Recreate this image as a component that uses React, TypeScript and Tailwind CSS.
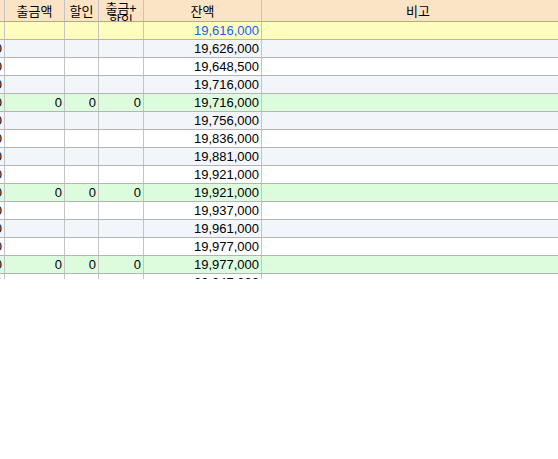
const rows = [
  { bal: "19,616,000", bg: "bg-[#fffcbe]", blue: true, zero: false, first: false },
  { bal: "19,626,000", bg: "bg-[#f2f6fa]" },
  { bal: "19,648,500", bg: "bg-white" },
  { bal: "19,716,000", bg: "bg-[#f2f6fa]" },
  { bal: "19,716,000", bg: "bg-[#ddfcdd]", zero: true },
  { bal: "19,756,000", bg: "bg-[#f2f6fa]" },
  { bal: "19,836,000", bg: "bg-white" },
  { bal: "19,881,000", bg: "bg-[#f2f6fa]" },
  { bal: "19,921,000", bg: "bg-white" },
  { bal: "19,921,000", bg: "bg-[#ddfcdd]", zero: true },
  { bal: "19,937,000", bg: "bg-white" },
  { bal: "19,961,000", bg: "bg-[#f2f6fa]" },
  { bal: "19,977,000", bg: "bg-white" },
  { bal: "19,977,000", bg: "bg-[#ddfcdd]", zero: true },
  { bal: "20,047,000", bg: "bg-white" },
];

const cell = "h-full border-r border-[#c4c4c4] flex items-center justify-end pr-[2px] shrink-0";
const head = "h-full border-r border-[#c4c4c4] flex items-center justify-center shrink-0 overflow-hidden";

export default function App() {
  return (
    <div className="w-[558px] h-[459px] bg-white overflow-hidden">
      <div
        className="h-[279px] overflow-hidden text-black"
        style={{ fontFamily: '"Liberation Sans", "Noto Sans CJK KR", sans-serif' }}
      >
        <div className="ml-[-26px] w-[600px]">
          {/* header */}
          <div
            className="flex h-[22px] bg-[#fbe3c6] border-b border-[#a8a8a8] text-[13px]"
            style={{ fontFamily: '"Noto Sans CJK KR", sans-serif' }}
          >
            <div className={`${head} w-[31px]`} />
            <div className={`${head} w-[60px] leading-[14px]`}>출금액</div>
            <div className={`${head} w-[34px] leading-[14px]`}>할인</div>
            <div className={`${head} w-[45px] flex-col justify-start! pt-[2px] leading-[12px]`}>
              <span>출금+</span>
              <span>할인</span>
            </div>
            <div className={`${head} w-[118px] leading-[14px]`}>잔액</div>
            <div className={`${head} flex-1 border-r-0 leading-[14px]`}>비고</div>
          </div>
          {/* body */}
          {rows.map((r, i) => (
            <div
              key={i}
              className={`flex h-[18px] border-b border-[#b4b4b4] text-[13px] leading-[14px] ${r.bg}`}
            >
              <div className={`${cell} w-[31px]`}>{i === 0 ? "" : "0"}</div>
              <div className={`${cell} w-[60px]`}>{r.zero ? "0" : ""}</div>
              <div className={`${cell} w-[34px]`}>{r.zero ? "0" : ""}</div>
              <div className={`${cell} w-[45px]`}>{r.zero ? "0" : ""}</div>
              <div className={`${cell} w-[118px] ${r.blue ? "text-[#1463f5]" : ""}`}>{r.bal}</div>
              <div className="h-full flex-1" />
            </div>
          ))}
        </div>
      </div>
    </div>
  );
}
